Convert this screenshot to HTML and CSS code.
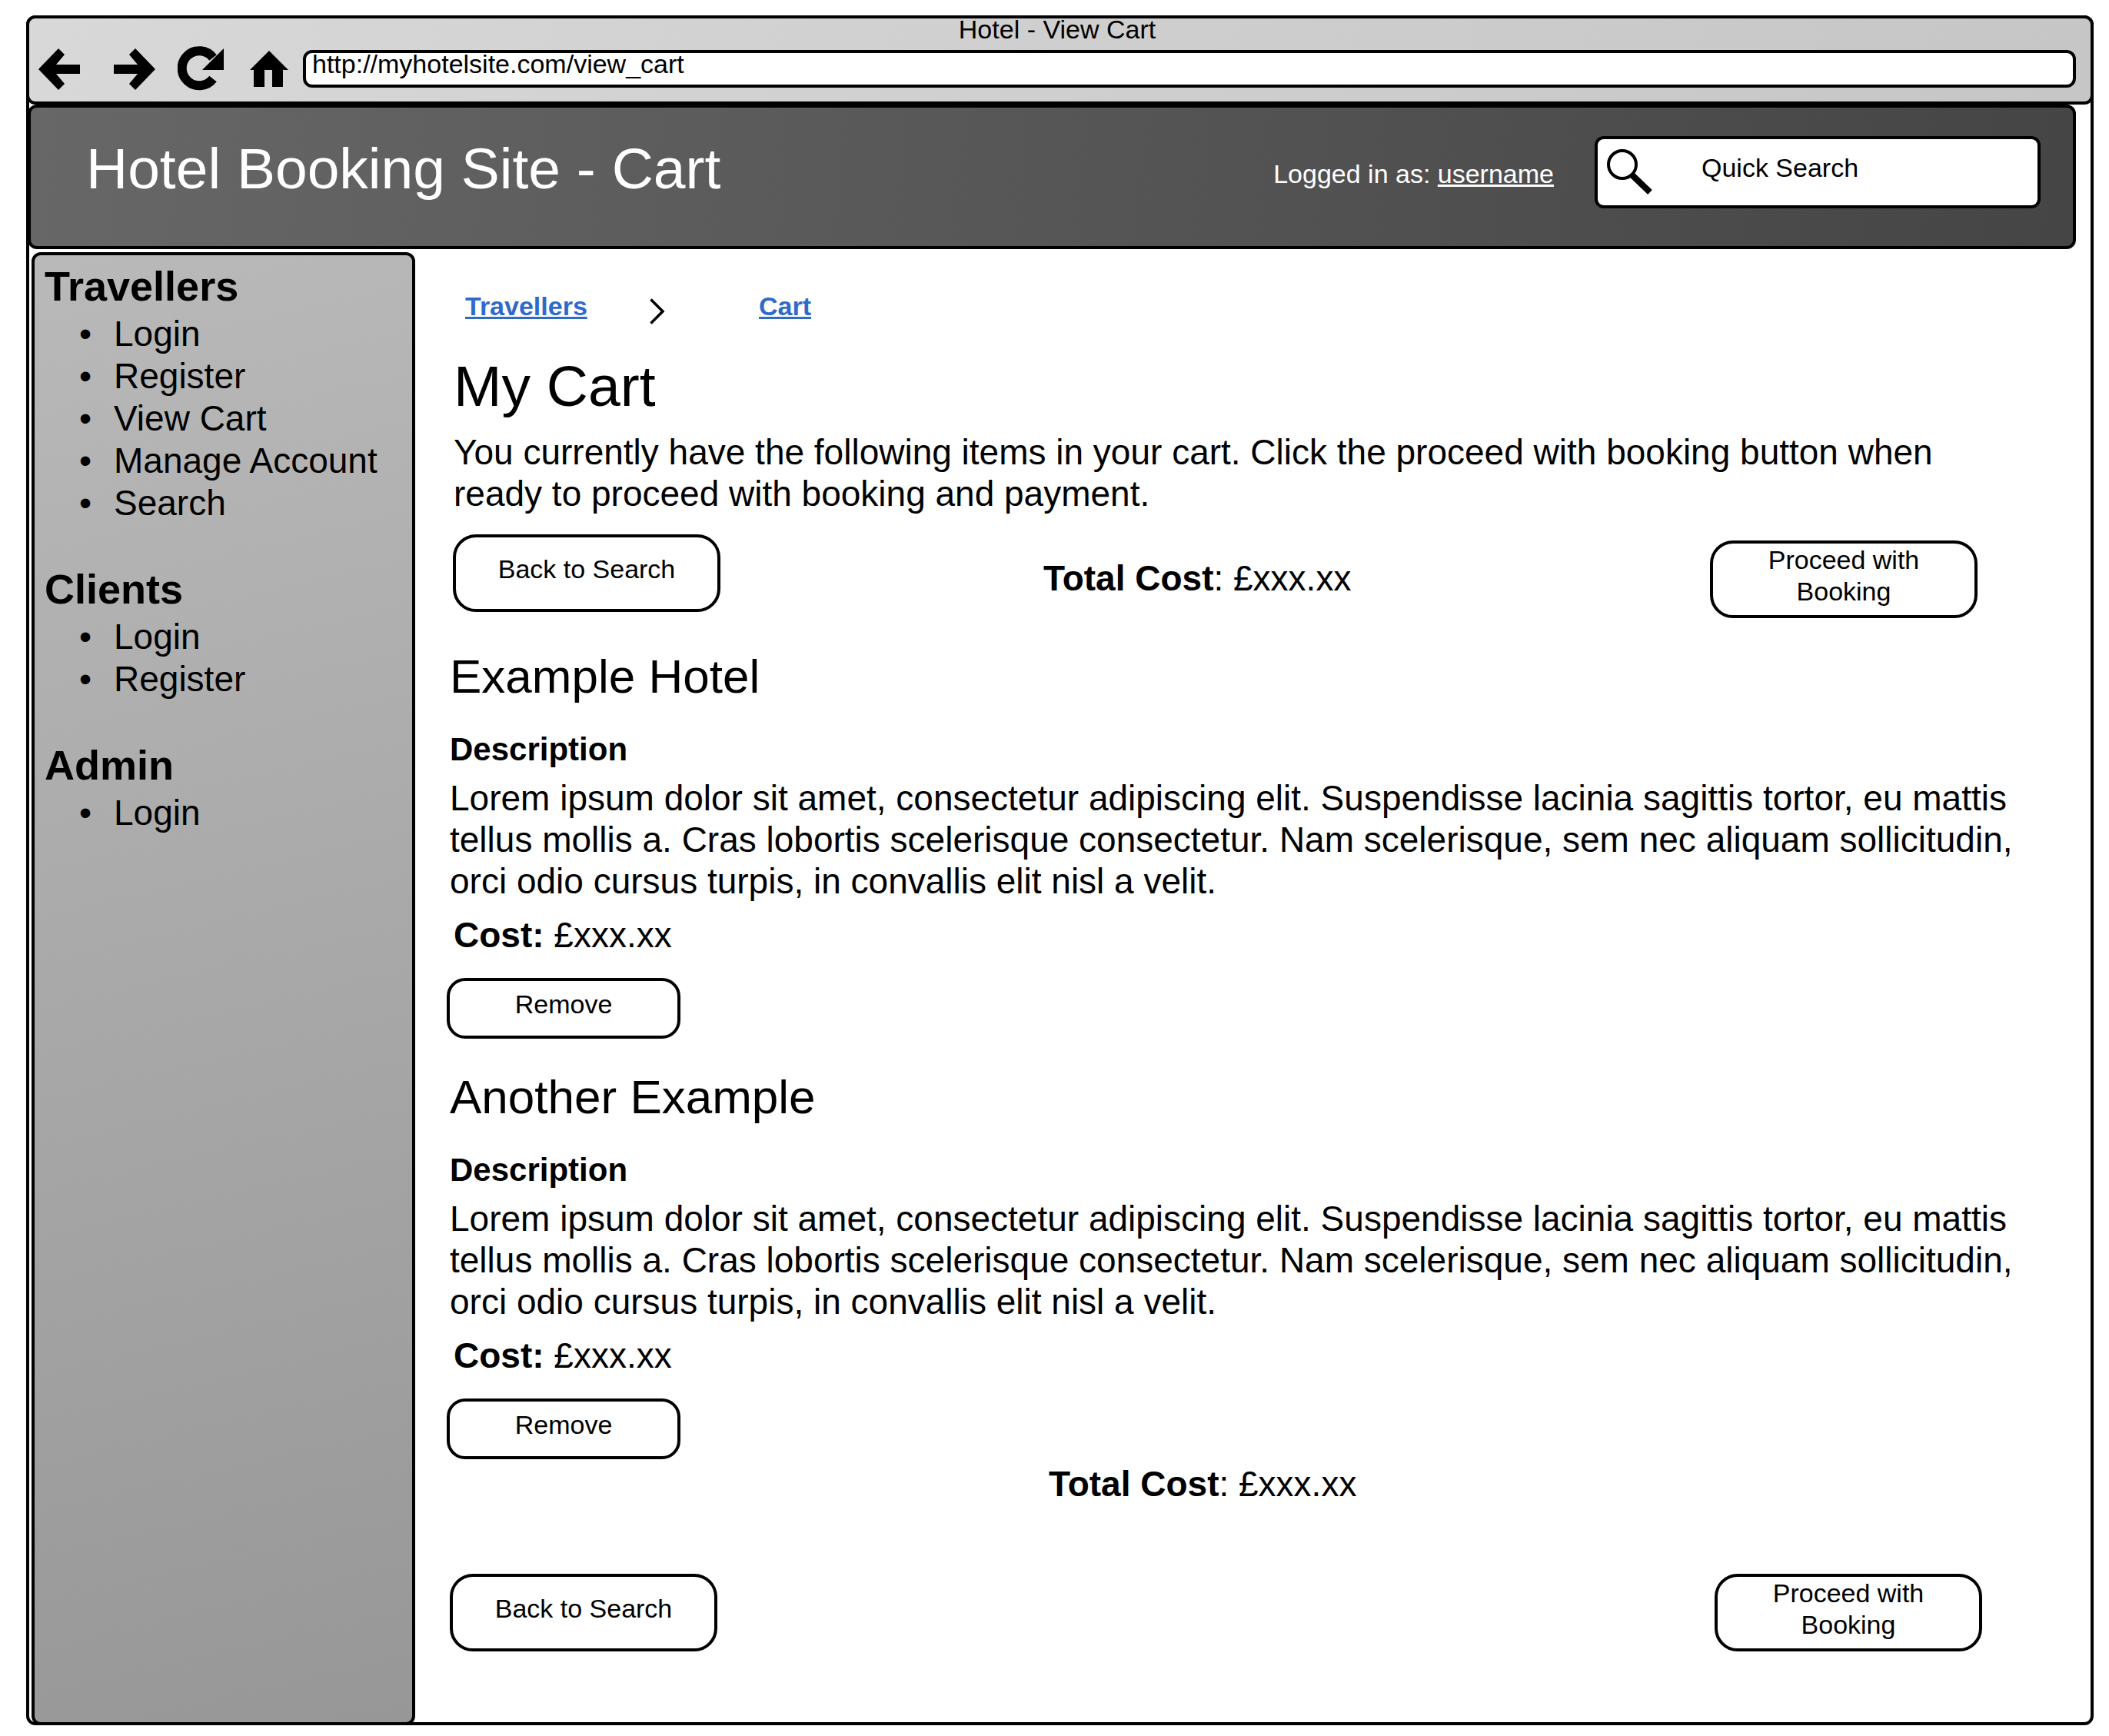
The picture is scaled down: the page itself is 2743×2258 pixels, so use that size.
FILE: index.html
```html
<!DOCTYPE html>
<html lang="en">
<head>
<meta charset="utf-8">
<title>Hotel - View Cart</title>
<link rel="stylesheet" href="styles.css">
</head>
<body>
<div class="window">
  <div class="chrome">
    <div class="chrome-title">Hotel - View Cart</div>
    <div class="chrome-bar">
      <button class="chrome-button" type="button" aria-label="Back">
        <svg width="54" height="54" viewBox="0 0 54 54"><path d="M0 27 26 0 34 8 23 21H54V33H23L34 46 26 54Z"/></svg>
      </button>
      <button class="chrome-button" type="button" aria-label="Forward">
        <svg width="54" height="54" viewBox="0 0 54 54"><path d="M54 27 28 0 20 8 31 21H0V33H31L20 46 28 54Z"/></svg>
      </button>
      <button class="chrome-button" type="button" aria-label="Reload">
        <svg width="60" height="59" viewBox="0 0 60 59"><path d="M46 42.500A22.500 22.500 0 1 1 46 15" fill="none" stroke="#000" stroke-width="12"/><path d="M60 3V31H32Z"/></svg>
      </button>
      <button class="chrome-button" type="button" aria-label="Home">
        <svg width="50" height="47" viewBox="0 0 50 47"><path d="M25 0 50 25H43V47H29V25H19V47H5V25H0Z"/></svg>
      </button>
      <input class="address" type="text" aria-label="Address" value="http://myhotelsite.com/view_cart">
    </div>
  </div>

  <header class="site-header">
    <h1 class="site-title">Hotel Booking Site - Cart</h1>
    <p class="login-state">Logged in as: <a href="#">username</a></p>
    <label class="search">
      <svg width="60" height="62" viewBox="0 0 60 62"><circle cx="20" cy="21" r="18" fill="none" stroke="#000" stroke-width="4"/><path d="M32 34 56 57" fill="none" stroke="#000" stroke-width="8"/></svg>
      <input class="search-input" type="text" aria-label="Quick Search" value="Quick Search">
    </label>
  </header>

  <div class="body">
    <nav class="sidebar">
      <section class="menu">
        <h2 class="menu-title">Travellers</h2>
        <ul class="menu-list">
          <li><a href="#">Login</a></li>
          <li><a href="#">Register</a></li>
          <li><a href="#">View Cart</a></li>
          <li><a href="#">Manage Account</a></li>
          <li><a href="#">Search</a></li>
        </ul>
      </section>
      <section class="menu">
        <h2 class="menu-title">Clients</h2>
        <ul class="menu-list">
          <li><a href="#">Login</a></li>
          <li><a href="#">Register</a></li>
        </ul>
      </section>
      <section class="menu">
        <h2 class="menu-title">Admin</h2>
        <ul class="menu-list">
          <li><a href="#">Login</a></li>
        </ul>
      </section>
    </nav>

    <main class="content">
      <nav class="breadcrumb" aria-label="Breadcrumb">
        <a href="#">Travellers</a>
        <svg width="22" height="44" viewBox="0 0 22 44"><path d="M1.500 11.500 17 27 1.500 42.500" fill="none" stroke="#000" stroke-width="3.500"/></svg>
        <a href="#">Cart</a>
      </nav>

      <section class="intro">
        <h2 class="page-title">My Cart</h2>
        <p class="text">You currently have the following items in your cart. Click the proceed with booking button when ready to proceed with booking and payment.</p>
      </section>

      <div class="actions actions-top">
        <button class="button" type="button">Back to Search</button>
        <p class="total"><strong>Total Cost</strong>: £xxx.xx</p>
        <button class="button" type="button">Proceed with Booking</button>
      </div>

      <article class="item">
        <h3 class="item-title">Example Hotel</h3>
        <h4 class="item-label">Description</h4>
        <p class="text">Lorem ipsum dolor sit amet, consectetur adipiscing elit. Suspendisse lacinia sagittis tortor, eu mattis tellus mollis a. Cras lobortis scelerisque consectetur. Nam scelerisque, sem nec aliquam sollicitudin, orci odio cursus turpis, in convallis elit nisl a velit.</p>
        <p class="cost"><strong>Cost:</strong> £xxx.xx</p>
        <button class="button button-small" type="button">Remove</button>
      </article>

      <article class="item">
        <h3 class="item-title">Another Example</h3>
        <h4 class="item-label">Description</h4>
        <p class="text">Lorem ipsum dolor sit amet, consectetur adipiscing elit. Suspendisse lacinia sagittis tortor, eu mattis tellus mollis a. Cras lobortis scelerisque consectetur. Nam scelerisque, sem nec aliquam sollicitudin, orci odio cursus turpis, in convallis elit nisl a velit.</p>
        <p class="cost"><strong>Cost:</strong> £xxx.xx</p>
        <button class="button button-small" type="button">Remove</button>
      </article>

      <p class="total total-bottom"><strong>Total Cost</strong>: £xxx.xx</p>
      <div class="actions actions-bottom">
        <button class="button" type="button">Back to Search</button>
        <button class="button" type="button">Proceed with Booking</button>
      </div>
    </main>
  </div>
</div>
</body>
</html>
```
FILE: styles.css
```css
* {
  box-sizing: border-box;
}

body {
  margin: 0;
  padding: 20px 20px 14px 34px;
  background: #fff;
  color: #000;
  font-family: "Liberation Sans", Arial, sans-serif;
  font-size: 46px;
  line-height: 54px;
}

h1, h2, h3, h4, p, ul {
  margin: 0;
  padding: 0;
}

button, input {
  color: inherit;
  font: inherit;
}

svg {
  display: block;
  flex: none;
}

.window {
  border: 4px solid #000;
  border-radius: 12px;
}

/* Browser bar */
.chrome {
  margin: -4px -4px 0;
  padding: 0 19px 13px 12px;
  border: 4px solid #000;
  border-radius: 12px;
  background: linear-gradient(100deg, #d8d8d8, #c6c6c6);
}

.chrome-title {
  font-size: 34px;
  line-height: 28px;
  text-align: center;
}

.chrome-bar {
  display: grid;
  grid-template-columns: 98px 83px 94px 69px 1fr;
  align-items: center;
  margin-top: 8px;
}

.chrome-button {
  justify-self: start;
  padding: 0;
  border: 0;
  background: none;
}

.address {
  width: 100%;
  height: 49px;
  padding: 0 8px 14px;
  border: 4px solid #000;
  border-radius: 12px;
  background: #fff;
  font-size: 34px;
}

/* Site header */
.site-header {
  display: flex;
  align-items: center;
  margin: 0 19px 0 -2px;
  padding: 37px 42px 49px 72px;
  border: 4px solid #000;
  border-radius: 12px;
  background: linear-gradient(95deg, #676767, #454545);
  color: #fff;
}

.site-title {
  flex: 1;
  padding-bottom: 10px;
  font-size: 75px;
  font-weight: normal;
  line-height: 84px;
}

.login-state {
  margin-right: 53px;
  padding-top: 3px;
  font-size: 34px;
}

.login-state a {
  color: inherit;
}

.search {
  display: flex;
  align-items: center;
  width: 580px;
  height: 94px;
  padding: 0 12px;
  border: 4px solid #000;
  border-radius: 12px;
  background: #fff;
  color: #000;
}

.search-input {
  flex: 1;
  min-width: 0;
  height: 86px;
  padding: 0 0 12px 63px;
  border: 0;
  background: none;
  font-size: 34px;
}

/* Page body */
.body {
  display: flex;
}

.sidebar {
  flex: none;
  width: 499px;
  margin: 4px 0 -4px 3px;
  padding: 7px 13px;
  border: 4px solid #000;
  border-radius: 12px;
  background: linear-gradient(167deg, #b9b9b9, #979797);
}

.menu + .menu {
  margin-top: 51px;
}

.menu-title {
  margin-bottom: 2px;
  font-size: 54px;
  line-height: 66px;
}

.menu-list {
  padding-left: 45px;
  line-height: 55px;
  list-style: none;
}

.menu-list li {
  display: flex;
}

.menu-list li::before {
  content: "•";
  width: 45px;
}

.menu-list a {
  color: inherit;
  text-decoration: none;
}

.content {
  flex: 1;
  padding: 54px 99px 92px 45px;
}

.breadcrumb {
  display: grid;
  grid-template-columns: 240px 142px auto;
  justify-content: start;
  height: 41px;
  padding-left: 20px;
  font-size: 34px;
  font-weight: bold;
  line-height: 41px;
}

.breadcrumb a {
  color: #2f6acb;
}

.intro {
  margin-top: 38px;
  padding-left: 5px;
}

.page-title {
  margin-bottom: 14px;
  font-size: 75px;
  font-weight: normal;
  line-height: 90px;
}

.actions {
  display: grid;
}

.actions-top {
  grid-template-columns: 768px 1fr auto;
  margin-top: 26px;
  padding: 0 48px 0 4px;
}

.actions-top .total {
  padding: 30px 0 25px;
}

.actions-top .button:last-child {
  align-self: end;
}

.actions-bottom {
  grid-template-columns: 1fr auto;
  margin-top: 90px;
  padding-right: 42px;
}

.total-bottom {
  margin-top: 5px;
  padding-left: 779px;
}

.button {
  width: 348px;
  height: 101px;
  padding: 0 40px 10px;
  border: 4px solid #000;
  border-radius: 30px;
  background: #fff;
  font-size: 34px;
  line-height: 41px;
}

.button-small {
  width: 304px;
  height: 79px;
  border-radius: 24px;
}

/* Cart items */
.item {
  margin-top: 38px;
}

.item-title {
  font-size: 62px;
  font-weight: normal;
  line-height: 76px;
}

.item-label {
  margin: 32px 0 11px;
  font-size: 42px;
  line-height: 50px;
}

.cost {
  margin: 16px 0 29px;
  padding-left: 5px;
}

.item .button {
  display: block;
  margin-left: -4px;
}
```
